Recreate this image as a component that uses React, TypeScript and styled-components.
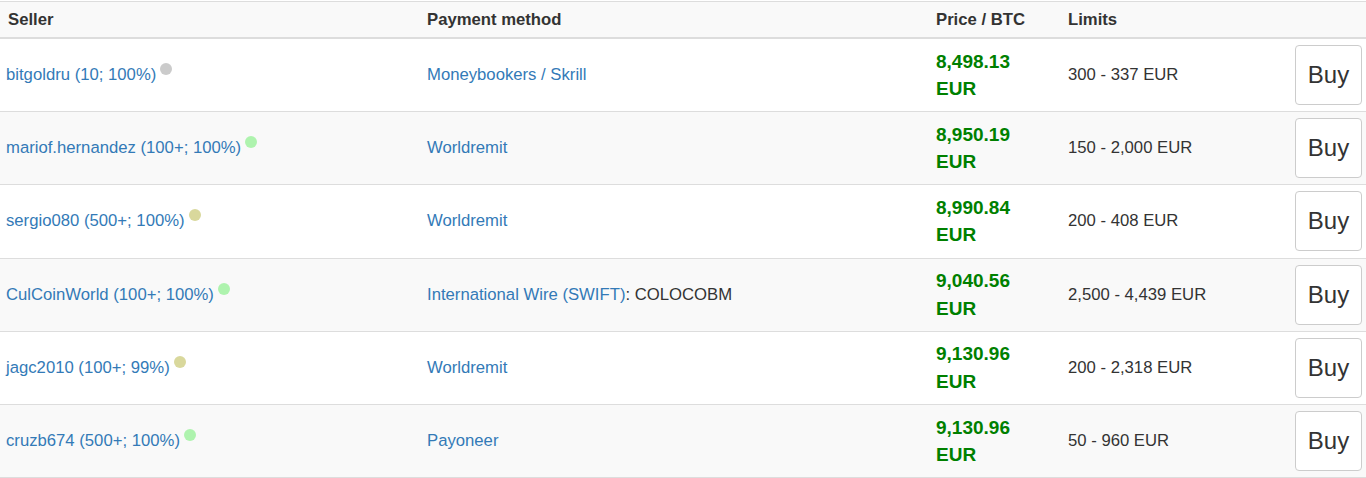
import React from "react";
import styled, { createGlobalStyle } from "styled-components";

const Global = createGlobalStyle`
  html, body { margin: 0; padding: 0; background: #fff; }
  body { font-family: "Liberation Sans", Arial, sans-serif; font-size: 16.7px; color: #333; }
`;

const Table = styled.table`
  width: 1366px;
  margin-top: 1px;
  border-collapse: collapse;
  border-spacing: 0;
  border-top: 1px solid #ddd;
  table-layout: fixed;
`;

const HeadCell = styled.th`
  text-align: left;
  font-weight: bold;
  font-size: 16.7px;
  line-height: 20px;
  height: 35px;
  padding: 0 8px;
  background: #f9f9f9;
  border-bottom: 2px solid #ddd;
  vertical-align: middle;
`;

const Row = styled.tr<{ $striped: boolean }>`
  background: ${(p) => (p.$striped ? "#f9f9f9" : "#fff")};
  border-bottom: 1px solid #ddd;
`;

const Cell = styled.td<{ $pl?: number; $pr?: number }>`
  height: 72.2px;
  padding: 0 ${(p) => p.$pr ?? 8}px 0 ${(p) => p.$pl ?? 8}px;
  vertical-align: middle;
  font-size: 16.7px;
  line-height: 22px;
  white-space: nowrap;
`;

const Link = styled.a`
  color: #337ab7;
  text-decoration: none;
`;

const Dot = styled.span<{ $color: string }>`
  display: inline-block;
  width: 12px;
  height: 12px;
  border-radius: 50%;
  background: ${(p) => p.$color};
  margin-left: 4px;
  position: relative;
  top: -5px;
`;

const Price = styled.div`
  color: #008000;
  font-weight: bold;
  font-size: 19px;
  line-height: 27.5px;
  white-space: normal;
`;

const BuyButton = styled.button`
  display: block;
  width: 67px;
  height: 60px;
  padding: 0;
  background: #fff;
  border: 1px solid #ccc;
  border-radius: 4px;
  color: #333;
  font-family: "Liberation Sans", Arial, sans-serif;
  font-size: 24px;
  cursor: pointer;
`;

const Plain = styled.span`
  color: #333;
`;

type Offer = {
  seller: string;
  dot: string;
  method: string;
  extra?: string;
  price: string;
  limits: string;
};

const GRAY = "#cbcbcb";
const GREEN = "#aef3ae";
const YELLOW = "#d9d89c";

const offers: Offer[] = [
  { seller: "bitgoldru (10; 100%)", dot: GRAY, method: "Moneybookers / Skrill", price: "8,498.13", limits: "300 - 337 EUR" },
  { seller: "mariof.hernandez (100+; 100%)", dot: GREEN, method: "Worldremit", price: "8,950.19", limits: "150 - 2,000 EUR" },
  { seller: "sergio080 (500+; 100%)", dot: YELLOW, method: "Worldremit", price: "8,990.84", limits: "200 - 408 EUR" },
  { seller: "CulCoinWorld (100+; 100%)", dot: GREEN, method: "International Wire (SWIFT)", extra: "COLOCOBM", price: "9,040.56", limits: "2,500 - 4,439 EUR" },
  { seller: "jagc2010 (100+; 99%)", dot: YELLOW, method: "Worldremit", price: "9,130.96", limits: "200 - 2,318 EUR" },
  { seller: "cruzb674 (500+; 100%)", dot: GREEN, method: "Payoneer", price: "9,130.96", limits: "50 - 960 EUR" },
];

export default function App() {
  return (
    <>
      <Global />
      <Table>
        <colgroup>
          <col style={{ width: 419 }} />
          <col style={{ width: 509 }} />
          <col style={{ width: 132 }} />
          <col style={{ width: 227 }} />
          <col style={{ width: 79 }} />
        </colgroup>
        <thead>
          <tr>
            <HeadCell>Seller</HeadCell>
            <HeadCell>Payment method</HeadCell>
            <HeadCell>Price / BTC</HeadCell>
            <HeadCell>Limits</HeadCell>
            <HeadCell />
          </tr>
        </thead>
        <tbody>
          {offers.map((o, i) => (
            <Row key={i} $striped={i % 2 === 1}>
              <Cell $pl={6}>
                <Link href="#">{o.seller}</Link>
                <Dot $color={o.dot} />
              </Cell>
              <Cell>
                <Link href="#">{o.method}</Link>
                {o.extra && <Plain>: {o.extra}</Plain>}
              </Cell>
              <Cell>
                <Price>
                  {o.price}
                  <br />
                  EUR
                </Price>
              </Cell>
              <Cell>{o.limits}</Cell>
              <Cell $pl={8} $pr={4}>
                <BuyButton>Buy</BuyButton>
              </Cell>
            </Row>
          ))}
        </tbody>
      </Table>
    </>
  );
}
